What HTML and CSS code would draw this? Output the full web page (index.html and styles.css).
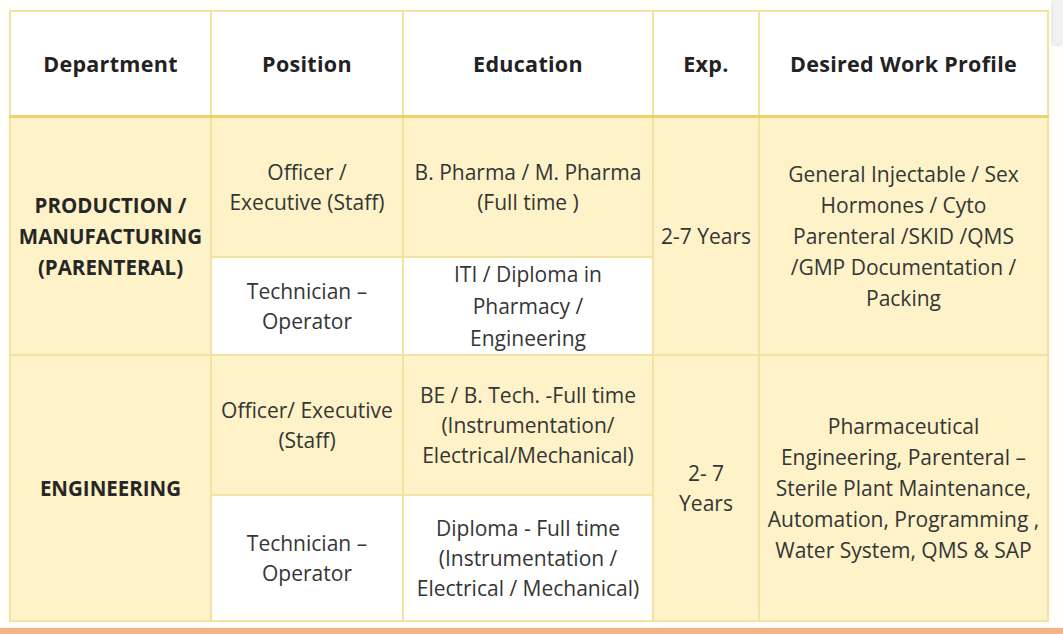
FILE: index.html
```html
<!DOCTYPE html>
<html>
<head>
<meta charset="utf-8">
<link rel="stylesheet" href="styles.css">
</head>
<body>
<div class="page">
  <table class="jobs">
    <colgroup>
      <col class="c1"><col class="c2"><col class="c3"><col class="c4"><col class="c5">
    </colgroup>
    <thead>
      <tr class="head">
        <th>Department</th>
        <th>Position</th>
        <th>Education</th>
        <th>Exp.</th>
        <th>Desired Work Profile</th>
      </tr>
    </thead>
    <tbody>
      <tr class="r1">
        <td rowspan="2" class="dept">PRODUCTION /<br>MANUFACTURING<br>(PARENTERAL)</td>
        <td>Officer /<br>Executive (Staff)</td>
        <td>B. Pharma / M. Pharma<br>(Full time )</td>
        <td rowspan="2">2-7 Years</td>
        <td rowspan="2" class="prof">General Injectable / Sex<br>Hormones / Cyto<br>Parenteral /SKID /QMS<br>/GMP Documentation /<br>Packing</td>
      </tr>
      <tr class="r2">
        <td class="white">Technician –<br>Operator</td>
        <td class="white edu3">ITI / Diploma in<br>Pharmacy /<br>Engineering</td>
      </tr>
      <tr class="r3">
        <td rowspan="2" class="dept">ENGINEERING</td>
        <td>Officer/ Executive<br>(Staff)</td>
        <td>BE / B. Tech. -Full time<br>(Instrumentation/<br>Electrical/Mechanical)</td>
        <td rowspan="2">2- 7<br>Years</td>
        <td rowspan="2" class="prof">Pharmaceutical<br>Engineering, Parenteral –<br>Sterile Plant Maintenance,<br>Automation, Programming ,<br>Water System, QMS &amp; SAP</td>
      </tr>
      <tr class="r4">
        <td class="white">Technician –<br>Operator</td>
        <td class="white">Diploma - Full time<br>(Instrumentation /<br>Electrical / Mechanical)</td>
      </tr>
    </tbody>
  </table>
  <div class="band"></div>
  <div class="edge"></div>
</div>
</body>
</html>
```

FILE: styles.css
```css
html, body {
  margin: 0;
  padding: 0;
  background: #fffefa;
}
.page {
  position: relative;
  width: 1063px;
  height: 634px;
  overflow: hidden;
  padding: 10px 0 0 9px;
  box-sizing: border-box;
  font-family: "Open Sans", Lato, sans-serif;
}
.jobs {
  border-collapse: collapse;
  table-layout: fixed;
  width: 1038px;
}
.c1 { width: 201px; }
.c2 { width: 192px; }
.c3 { width: 250px; }
.c4 { width: 106px; }
.c5 { width: 289px; }
.jobs th, .jobs td {
  border: 2px solid #f4e3a0;
  text-align: center;
  vertical-align: middle;
  padding: 0;
  white-space: nowrap;
}
.jobs th {
  background: #ffffff;
  color: #222222;
  font-weight: 700;
  font-size: 21.5px;
  letter-spacing: 0.3px;
  height: 103px;
  border-bottom: 3px solid #f1d168;
}
.jobs td {
  background: #fdf2c8;
  color: #353535;
  font-size: 21px;
  line-height: 30px;
  letter-spacing: 0;
}
.jobs td.white {
  background: #ffffff;
}
.jobs td.dept {
  color: #262626;
  font-weight: 700;
  font-size: 20.5px;
  line-height: 31px;
  letter-spacing: 0;
}
.jobs td.prof {
  line-height: 31px;
}
.jobs td.edu3 {
  line-height: 32px;
}
.r1 td { height: 138px; }
.r2 td { height: 95px; }
.r3 td { height: 138px; }
.r4 td { height: 124px; }
.band {
  position: absolute;
  left: 0;
  right: 0;
  top: 628px;
  height: 6px;
  background: #f4b38a;
}
.edge {
  position: absolute;
  right: 0;
  top: 0;
  width: 10px;
  height: 44px;
  background: #f1f1f1;
  box-shadow: -1px 1px 3px rgba(0,0,0,0.15);
}
```
